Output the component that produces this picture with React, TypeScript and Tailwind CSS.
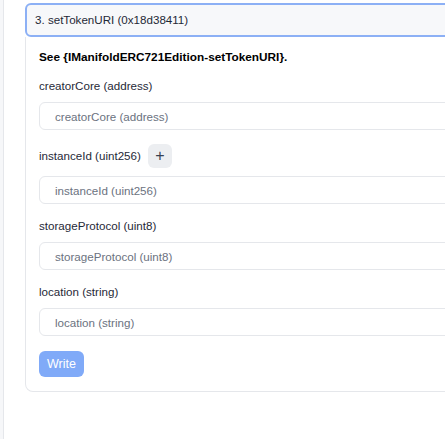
const fields = [
  { name: 'creatorCore (address)', add: false },
  { name: 'instanceId (uint256)', add: true },
  { name: 'storageProtocol (uint8)', add: false },
  { name: 'location (string)', add: false },
];

export default function App() {
  return (
    <div
      className="flex h-[439px] w-[445px] overflow-hidden bg-white text-[#1f2937]"
      style={{ fontFamily: '"Liberation Sans", Arial, sans-serif' }}
    >
      {/* side rail */}
      <div className="w-[4px] shrink-0 border-r border-[#e5e7eb] bg-[#f6f7f9]" />

      <div className="shrink-0 pl-[21px] pt-[3px]">
        <div className="w-[480px]">
          {/* accordion header */}
          <div className="flex h-[34px] items-center rounded-md border-2 border-[#8cb0f5] bg-[#f7f8fa] pl-2 text-[11.6px] text-[#1f2937]">
            3. setTokenURI (0x18d38411)
          </div>

          {/* accordion body */}
          <div className="rounded-b-lg border-x border-b border-[#e5e7eb] pl-[13px] pt-[12px] pb-[14px]">
            <p className="text-[11.8px] font-bold leading-4 text-black">
              See {'{'}IManifoldERC721Edition-setTokenURI{'}'}.
            </p>

            <div className="mt-[13px] flex flex-col gap-[14px]">
              {fields.map((f) => (
                <div key={f.name} className="flex flex-col gap-2">
                  <div className="flex items-center gap-[7px] text-[11.6px] leading-4 text-[#1f2937]">
                    <span>{f.name}</span>
                    {f.add && (
                      <button className="flex h-6 w-6 items-center justify-center rounded-md bg-[#eceef1] text-[16px] font-light leading-none text-[#374151]">
                        +
                      </button>
                    )}
                  </div>
                  <input
                    placeholder={f.name}
                    className="h-[28px] w-full rounded-md border border-[#e5e7eb] bg-white pl-[15px] text-[11.6px] text-[#374151] outline-none placeholder:text-[#6b7280]"
                  />
                </div>
              ))}
            </div>

            <button className="mt-[15px] h-[26px] rounded-md bg-[#80aaf8] px-2 text-[12.5px] font-medium text-white">
              Write
            </button>
          </div>
        </div>
      </div>
    </div>
  );
}
